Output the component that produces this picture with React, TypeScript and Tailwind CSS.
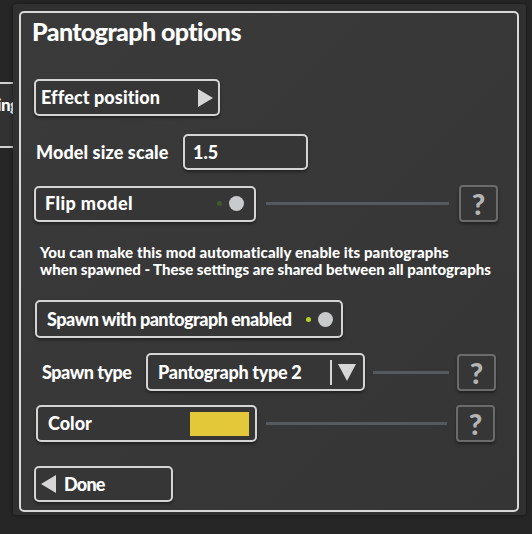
const font = { fontFamily: 'Lato, "Open Sans", sans-serif' }

function Play({ dir = 'right' }: { dir?: 'right' | 'left' }) {
  return (
    <svg width="15" height="18" viewBox="0 0 15 18">
      {dir === 'right'
        ? <polygon points="0,0 15,9 0,18" fill="#d6d6d6" />
        : <polygon points="15,0 0,9 15,18" fill="#d6d6d6" />}
    </svg>
  )
}

function Help() {
  return (
    <div className="w-[39px] h-[37px] shrink-0 rounded-[4px] border-2 border-[#6b6b6b] bg-[#363636] flex items-center justify-center shadow-[0_2px_3px_rgba(0,0,0,0.4)]">
      <span className="text-[29px] font-black text-[#b4b4b4] leading-none">?</span>
    </div>
  )
}

function Toggle({ dot }: { dot: string }) {
  return (
    <div className="flex items-center gap-[7px]">
      <div className="w-[5px] h-[5px] rounded-full" style={{ background: dot }} />
      <div className="w-[15px] h-[15px] rounded-full bg-[#c9cacc]" />
    </div>
  )
}

function Line() {
  return <div className="flex-1 h-[3px] bg-[#545a5d]" />
}

export default function App() {
  return (
    <div className="relative w-[532px] h-[534px] bg-[#262626] overflow-hidden text-white" style={font}>
      {/* window behind */}
      <div className="absolute left-0 top-[82px] w-[30px] h-[66px] bg-[#323232] border-t-2 border-b-2 border-[#d0d0d0]">
        <span className="absolute left-[-3px] top-[8px] text-[17px] font-black tracking-[-0.5px]">ing</span>
      </div>

      <div className="absolute left-[13px] top-[4px] w-[513px] h-[511px] bg-[#303030] rounded-[3px] pl-[6px] pr-[6px] pt-[7px] shadow-[0_0_4px_rgba(0,0,0,0.5)]">
        <div className="w-[500px] h-[501px] rounded-[5px] border-2 border-[#d8d8d8] bg-gradient-to-br from-[#3a3a3a] to-[#353535] pl-[11px] pt-[3px] flex flex-col">
          <div className="h-[30px] leading-[30px] text-[25px] font-black tracking-[-0.6px]">Pantograph options</div>

          {/* Effect position */}
          <div className="mt-[33px] flex">
            <div className="ml-[2px] w-[186px] h-[37px] rounded-[5px] border-2 border-[#d4d4d4] bg-[#363636] shadow-[0_2px_3px_rgba(0,0,0,0.4)] flex items-center justify-between pl-[5px] pr-[5px]">
              <span className="text-[18px] font-black tracking-[0.1px]">Effect position</span>
              <Play />
            </div>
          </div>

          {/* Model size scale */}
          <div className="mt-[18px] flex items-center h-[36px]">
            <span className="ml-[4px] w-[147px] text-[18px] font-black tracking-[0.1px]">Model size scale</span>
            <div className="w-[125px] h-[36px] rounded-[5px] border-2 border-[#d4d4d4] bg-[#363636] shadow-[0_2px_3px_rgba(0,0,0,0.4)] flex items-center pl-[8px]">
              <span className="text-[18px] font-black">1.5</span>
            </div>
          </div>

          {/* Flip model */}
          <div className="mt-[15px] flex items-center h-[37px] pr-[19px]">
            <div className="ml-[2px] w-[222px] h-[36px] rounded-[5px] border-2 border-[#d4d4d4] bg-[#363636] shadow-[0_2px_3px_rgba(0,0,0,0.4)] flex items-center justify-between pl-[9px] pr-[10px]">
              <span className="text-[18px] font-black tracking-[0.4px]">Flip model</span>
              <Toggle dot="#3f5b2b" />
            </div>
            <div className="mx-[10px] flex-1 flex"><Line /></div>
            <Help />
          </div>

          {/* info */}
          <div className="mt-[22px] ml-[8px] text-[15px] leading-[17px] font-black">
            <div className="tracking-[0.1px]">You can make this mod automatically enable its pantographs</div>
            <div className="tracking-[0px]">when spawned - These settings are shared between all pantographs</div>
          </div>

          {/* Spawn with pantograph */}
          <div className="mt-[22px] flex">
            <div className="ml-[3px] w-[308px] h-[38px] rounded-[5px] border-2 border-[#d4d4d4] bg-[#363636] shadow-[0_2px_3px_rgba(0,0,0,0.4)] flex items-center justify-between pl-[10px] pr-[8px]">
              <span className="text-[18px] font-black tracking-[-0.5px]">Spawn with pantograph enabled</span>
              <Toggle dot="#b5d321" />
            </div>
          </div>

          {/* Spawn type */}
          <div className="mt-[14px] flex items-center h-[40px] pr-[21px]">
            <span className="ml-[10px] w-[104px] text-[18px] font-black tracking-[-0.5px]">Spawn type</span>
            <div className="w-[219px] h-[38px] rounded-[5px] border-2 border-[#d4d4d4] bg-[#363636] shadow-[0_2px_3px_rgba(0,0,0,0.4)] flex items-center pl-[10px] pr-[7px]">
              <span className="flex-1 text-[18px] font-black tracking-[-0.3px]">Pantograph type 2</span>
              <div className="w-[2px] h-[25px] bg-[#d4d4d4] mr-[6px]" />
              <svg width="18" height="17" viewBox="0 0 18 17"><polygon points="0,0 18,0 9,17" fill="#d6d6d6" /></svg>
            </div>
            <div className="mx-[8px] flex-1 flex"><Line /></div>
            <Help />
          </div>

          {/* Color */}
          <div className="mt-[12px] flex items-center h-[39px] pr-[22px]">
            <div className="ml-[4px] w-[221px] h-[37px] rounded-[5px] border-2 border-[#d4d4d4] bg-[#363636] shadow-[0_2px_3px_rgba(0,0,0,0.4)] flex items-center justify-between pl-[10px] pr-[6px]">
              <span className="text-[18px] font-black tracking-[0px]">Color</span>
              <div className="w-[59px] h-[24px] bg-[#e3c93a]" />
            </div>
            <div className="mx-[9px] flex-1 flex"><Line /></div>
            <Help />
          </div>

          {/* Done */}
          <div className="mt-[23px] flex">
            <div className="ml-[2px] w-[139px] h-[36px] rounded-[5px] border-2 border-[#d4d4d4] bg-[#363636] shadow-[0_2px_3px_rgba(0,0,0,0.4)] flex items-center pl-[5px] gap-[8px]">
              <Play dir="left" />
              <span className="text-[18px] font-black tracking-[-0.8px]">Done</span>
            </div>
          </div>
        </div>
      </div>
    </div>
  )
}
